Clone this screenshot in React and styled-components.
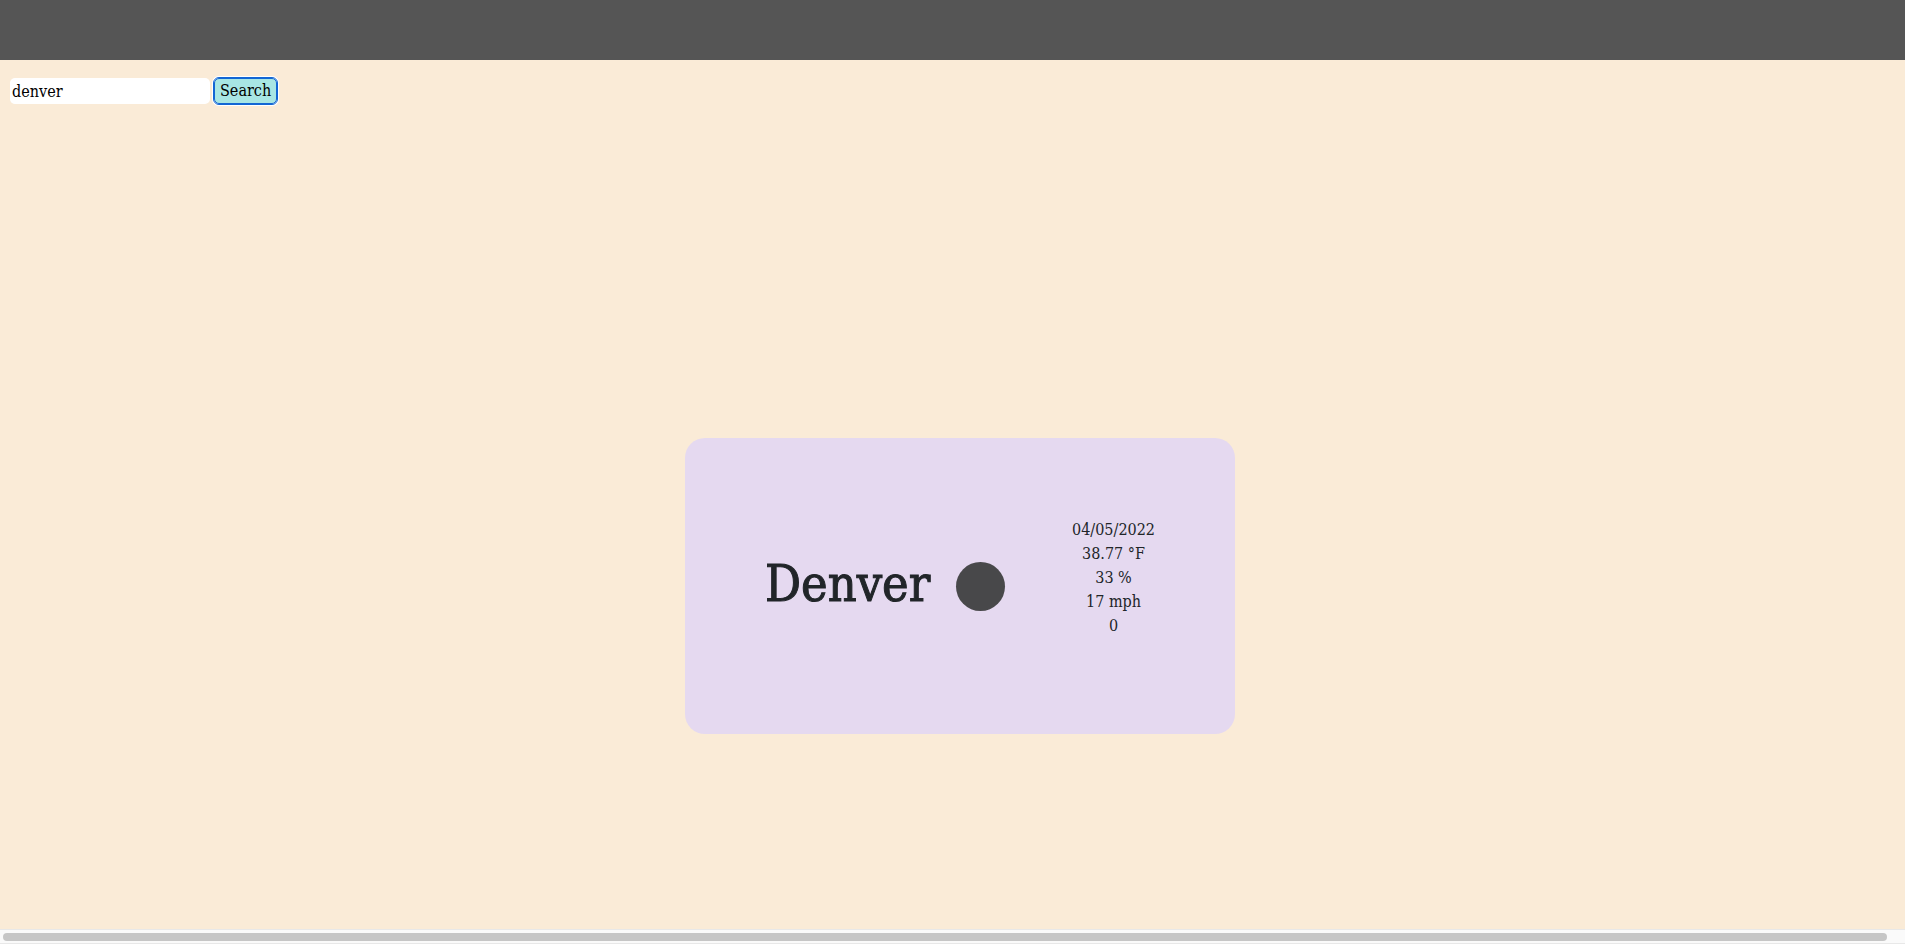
import React, { useState } from "react";
import styled, { createGlobalStyle } from "styled-components";

const slab = '"Roboto Slab", "DejaVu Serif Condensed", "DejaVu Serif", serif';

const GlobalStyle = createGlobalStyle`
  *, *::before, *::after { box-sizing: border-box; }
  body {
    margin: 0;
    background: #faebd7;
    color: #212529;
    font-family: ${slab};
    font-size: 16px;
    line-height: 24px;
  }
`;

const Page = styled.div`
  display: flex;
  flex-direction: column;
  min-height: 100vh;
`;

const Header = styled.header`
  height: 60px;
  background: #555555;
`;

const SearchForm = styled.form`
  display: flex;
  align-items: center;
  gap: 4px;
  padding: 18px 10px;
`;

const SearchInput = styled.input`
  width: 200px;
  height: 26px;
  padding: 0 2px;
  border: 0;
  border-radius: 5px;
  background: #ffffff;
  color: #000000;
  font: inherit;
`;

const SearchButton = styled.button`
  height: 26px;
  padding: 0 5px;
  border: 1px solid #1266d4;
  border-radius: 5px;
  outline: 1px solid #1266d4;
  box-shadow: 0 0 0 2px #ffffff;
  background: #a8e6e4;
  color: #000000;
  font: inherit;
`;

const Main = styled.main`
  display: flex;
  flex: 1;
  align-items: center;
  justify-content: center;
  padding: 121px 0 0 15px;
`;

const Card = styled.section`
  display: flex;
  align-items: center;
  width: 550px;
  padding: 80px;
  border-radius: 20px;
  background: #e5d9f0;
`;

const City = styled.h1`
  margin: 0 0 4px;
  font-size: 50px;
  line-height: 60px;
  font-weight: 400;
  -webkit-text-stroke: 1px currentColor;
`;

const WeatherIcon = styled.svg`
  flex: none;
  width: 100px;
  height: 100px;
`;

const Readings = styled.ul`
  margin: 0 0 16px auto;
  padding: 0;
  list-style: none;
  text-align: center;
  white-space: nowrap;
`;

const ScrollTrack = styled.div`
  height: 15px;
  padding: 3px 18px 2px 3px;
  border: solid #e8e8e8;
  border-width: 1px 0;
  background: #fafafa;
`;

const ScrollThumb = styled.div`
  height: 8px;
  border-radius: 4px;
  background: #c6c6c6;
`;

const readings = ["04/05/2022", "38.77 °F", "33 %", "17 mph", "0"];

export default function App() {
  const [query, setQuery] = useState("denver");

  return (
    <Page>
      <GlobalStyle />
      <Header />
      <SearchForm onSubmit={(event) => event.preventDefault()}>
        <SearchInput
          type="text"
          aria-label="City"
          value={query}
          onChange={(event) => setQuery(event.target.value)}
        />
        <SearchButton type="submit">Search</SearchButton>
      </SearchForm>
      <Main>
        <Card>
          <City>Denver</City>
          <WeatherIcon viewBox="0 0 100 100" aria-hidden="true">
            <circle cx="50.5" cy="50.5" r="24.5" fill="#48484a" />
          </WeatherIcon>
          <Readings>
            {readings.map((reading) => (
              <li key={reading}>{reading}</li>
            ))}
          </Readings>
        </Card>
      </Main>
      <ScrollTrack>
        <ScrollThumb />
      </ScrollTrack>
    </Page>
  );
}
